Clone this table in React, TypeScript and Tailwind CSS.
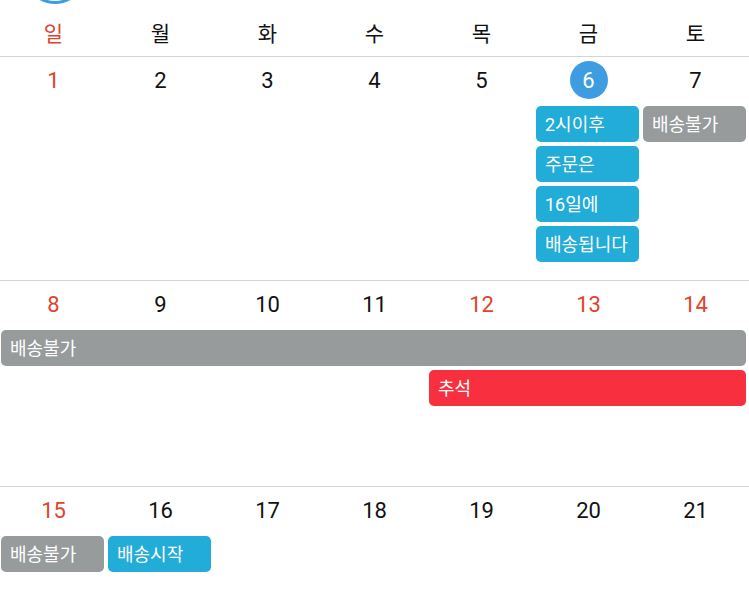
import React from 'react';

type Tone = 'blue' | 'gray' | 'red';

interface CalEvent {
  label: string;
  col: number;
  span: number;
  row: number;
  tone: Tone;
}

interface Week {
  days: { n: number; red?: boolean; today?: boolean }[];
  events: CalEvent[];
}

const colStart: Record<number, string> = {
  1: 'col-start-1',
  2: 'col-start-2',
  3: 'col-start-3',
  4: 'col-start-4',
  5: 'col-start-5',
  6: 'col-start-6',
  7: 'col-start-7',
};

const colSpan: Record<number, string> = {
  1: 'col-span-1',
  2: 'col-span-2',
  3: 'col-span-3',
  4: 'col-span-4',
  5: 'col-span-5',
  6: 'col-span-6',
  7: 'col-span-7',
};

const rowStart: Record<number, string> = {
  1: 'row-start-1',
  2: 'row-start-2',
  3: 'row-start-3',
  4: 'row-start-4',
};

const toneClasses: Record<Tone, string> = {
  blue: 'bg-[#22acd8]',
  gray: 'bg-[#979b9c]',
  red: 'bg-[#f72f3f]',
};

const weekdays = ['일', '월', '화', '수', '목', '금', '토'];

const weeks: Week[] = [
  {
    days: [
      { n: 1, red: true },
      { n: 2 },
      { n: 3 },
      { n: 4 },
      { n: 5 },
      { n: 6, today: true },
      { n: 7 },
    ],
    events: [
      { label: '2시이후', col: 6, span: 1, row: 1, tone: 'blue' },
      { label: '배송불가', col: 7, span: 1, row: 1, tone: 'gray' },
      { label: '주문은', col: 6, span: 1, row: 2, tone: 'blue' },
      { label: '16일에', col: 6, span: 1, row: 3, tone: 'blue' },
      { label: '배송됩니다', col: 6, span: 1, row: 4, tone: 'blue' },
    ],
  },
  {
    days: [
      { n: 8, red: true },
      { n: 9 },
      { n: 10 },
      { n: 11 },
      { n: 12, red: true },
      { n: 13, red: true },
      { n: 14, red: true },
    ],
    events: [
      { label: '배송불가', col: 1, span: 7, row: 1, tone: 'gray' },
      { label: '추석', col: 5, span: 3, row: 2, tone: 'red' },
    ],
  },
  {
    days: [
      { n: 15, red: true },
      { n: 16 },
      { n: 17 },
      { n: 18 },
      { n: 19 },
      { n: 20 },
      { n: 21 },
    ],
    events: [
      { label: '배송불가', col: 1, span: 1, row: 1, tone: 'gray' },
      { label: '배송시작', col: 2, span: 1, row: 1, tone: 'blue' },
    ],
  },
];

const WeekRow: React.FC<{ week: Week }> = ({ week }) => (
  <div className="border-t border-[#d4d4d4] min-h-[206px] pb-[18px]">
    <div className="grid grid-cols-7 h-[49px]">
      {week.days.map((d) => (
        <div key={d.n} className="flex justify-center pt-[4px]">
          {d.today ? (
            <span className="w-[38px] h-[38px] rounded-full bg-[#3d9de0] text-white flex items-center justify-center text-[22px]">
              {d.n}
            </span>
          ) : (
            <span
              className={
                'h-[38px] flex items-center text-[22px] ' +
                (d.red ? 'text-[#e0432b]' : 'text-[#111111]')
              }
            >
              {d.n}
            </span>
          )}
        </div>
      ))}
    </div>
    <div className="grid grid-cols-7 gap-y-[4px]">
      {week.events.map((e, i) => (
        <div
          key={i}
          className={[
            colStart[e.col],
            colSpan[e.span],
            rowStart[e.row],
            toneClasses[e.tone],
            'ml-[1px] mr-[3px] h-[36px] rounded-[5px] pl-[9px] flex items-center text-white text-[18px] whitespace-nowrap overflow-hidden',
          ].join(' ')}
        >
          {e.label}
        </div>
      ))}
    </div>
  </div>
);

export default function App() {
  return (
    <div
      className="w-[749px] h-[611px] overflow-hidden bg-white"
      style={{ fontFamily: "Roboto, 'Noto Sans CJK KR', sans-serif" }}
    >
      {/* bottom edge of the month header ring */}
      <div className="h-[5px] overflow-hidden relative">
        <div className="absolute left-[24px] -top-[58px] w-[62px] h-[62px] rounded-full border-[3px] border-[#3d9de0]" />
      </div>
      <div className="grid grid-cols-7 h-[51px] pt-[9px]">
        {weekdays.map((w, i) => (
          <div
            key={w}
            className={
              'flex justify-center text-[21px] leading-[40px] ' +
              (i === 0 ? 'text-[#e0432b]' : 'text-[#111111]')
            }
          >
            {w}
          </div>
        ))}
      </div>
      {weeks.map((w, i) => (
        <WeekRow key={i} week={w} />
      ))}
    </div>
  );
}
